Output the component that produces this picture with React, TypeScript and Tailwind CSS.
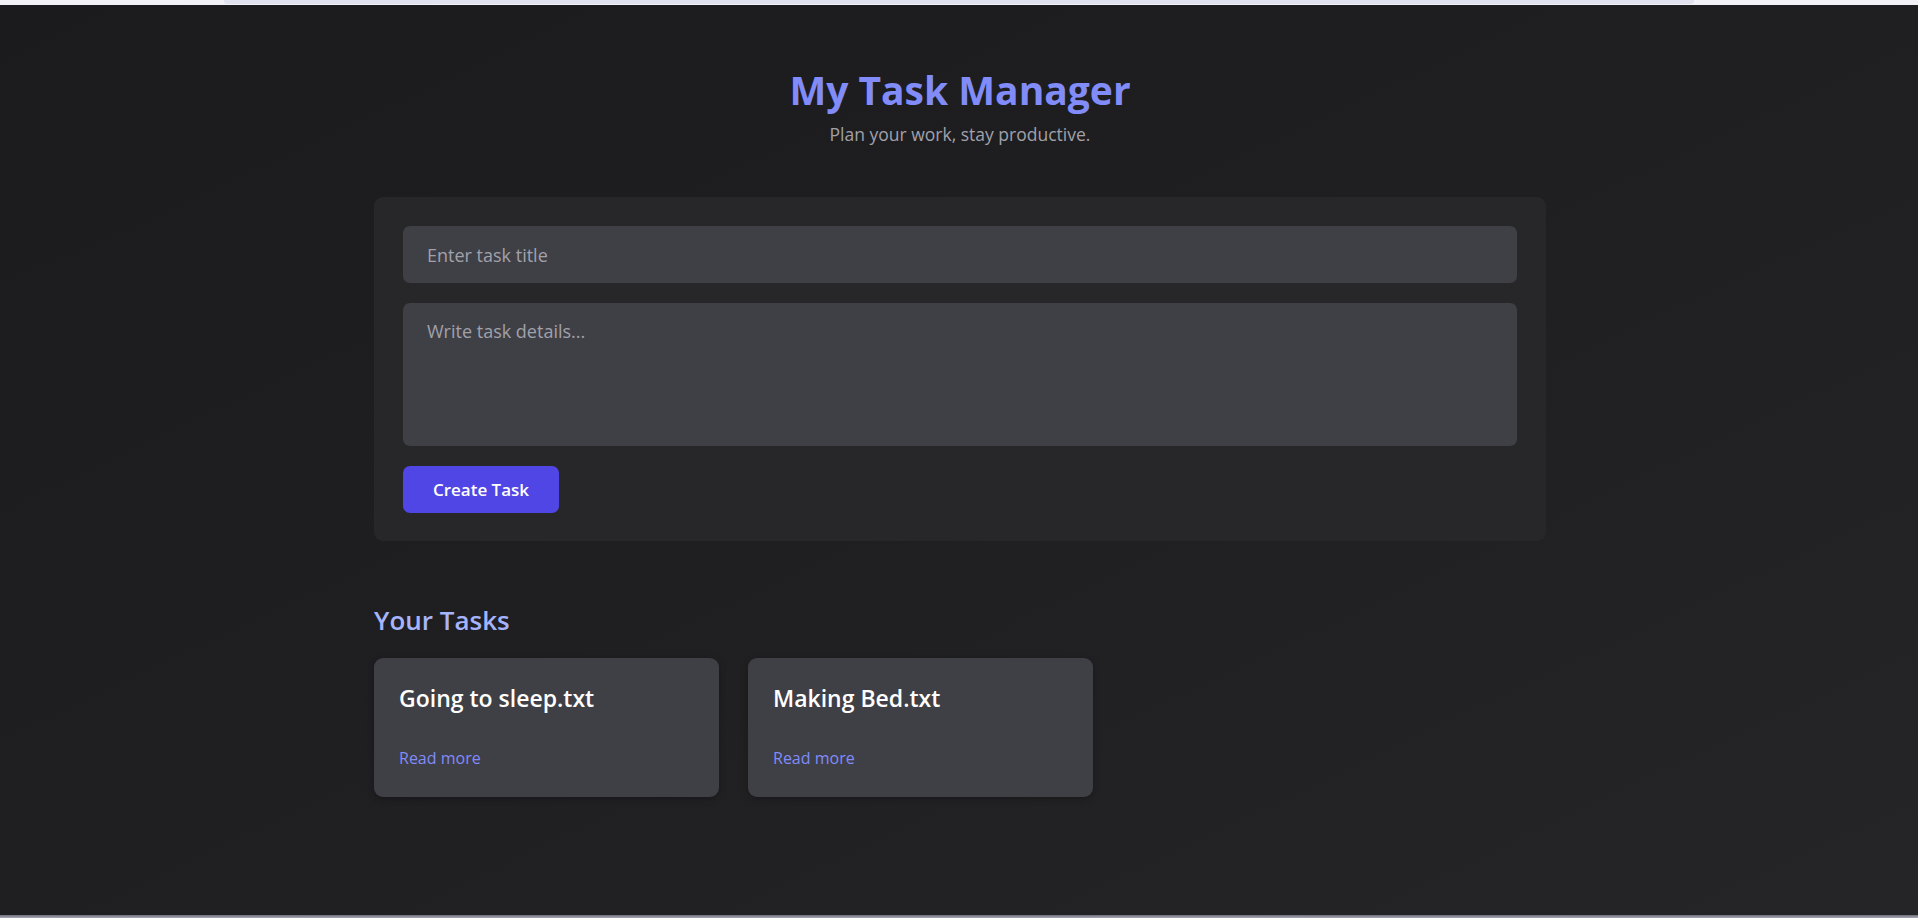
import React from "react";

const font = { fontFamily: '"Open Sans", "Noto Sans", Arial, sans-serif' };

function TaskCard({ title }: { title: string }) {
  return (
    <div className="w-[345px] h-[139px] rounded-[9px] bg-[#3f3f46] pl-[25px] pr-5 pt-[25px] shadow-[0_2px_6px_rgba(0,0,0,0.25)] flex flex-col">
      <h3 className="text-[23px] leading-[30px] font-semibold text-white">{title}</h3>
      <a className="mt-[33px] text-[16px] leading-[24px] text-[#818cf8] w-fit">Read more</a>
    </div>
  );
}

export default function App() {
  return (
    <div className="h-[918px] w-full flex flex-col overflow-hidden" style={font}>
      <div className="h-[5px] bg-[#f1f1f7] flex justify-center">
        <div className="w-[1470px] h-[4px] bg-[#e1e2f0] rounded-b-[3px]" />
      </div>
      <main className="flex-1 bg-gradient-to-br from-[#1b1b1e] via-[#1f1f22] to-[#252527] pt-[61px] pl-[2px]">
        <div className="w-[1172px] mx-auto">
          <header className="text-center">
            <h1 className="text-[39px] leading-[48px] font-bold text-[#818cf8]">My Task Manager</h1>
            <p className="mt-[7px] text-[17.5px] leading-[26px] text-[#a1a1aa]">Plan your work, stay productive.</p>
          </header>

          <section className="mt-[50px] rounded-[9px] bg-[#27272a] px-[29px] pt-[29px] pb-[28px] flex flex-col">
            <input
              className="h-[57px] w-full rounded-[7px] bg-[#3f3f46] px-6 text-[18px] text-white placeholder:text-[#a1a1aa] outline-none"
              placeholder="Enter task title"
            />
            <textarea
              className="mt-[20px] h-[143px] w-full rounded-[7px] bg-[#3f3f46] px-6 py-[15px] text-[18px] leading-[27px] text-white placeholder:text-[#a1a1aa] outline-none resize-none"
              placeholder="Write task details..."
            />
            <button className="mt-[20px] w-[156px] h-[47px] rounded-[7px] bg-[#4f46e5] text-white text-[17px] font-semibold">
              Create Task
            </button>
          </section>

          <h2 className="mt-[61px] text-[26px] leading-[36px] font-semibold text-[#a5b4fc]">Your Tasks</h2>
          <div className="mt-[20px] flex gap-[29px]">
            <TaskCard title="Going to sleep.txt" />
            <TaskCard title="Making Bed.txt" />
          </div>
        </div>
      </main>
      <div className="h-[3px] bg-gradient-to-b from-[#6e6e7a] to-[#a9a9b6]" />
    </div>
  );
}
